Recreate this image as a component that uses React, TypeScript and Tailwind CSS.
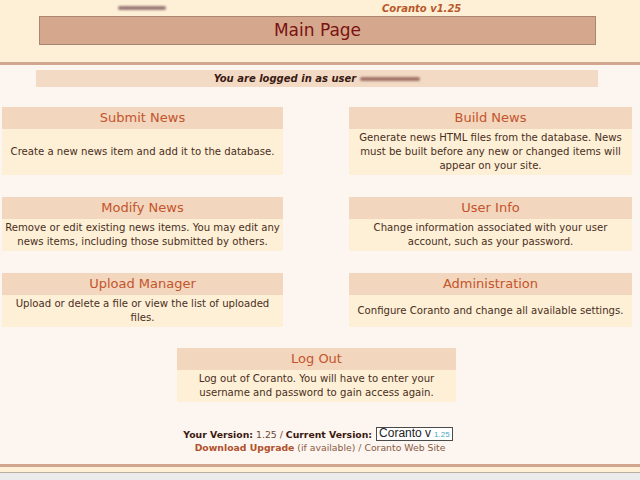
import React from "react";

const cards: [string, string][] = [
  ["Submit News", "Create a new news item and add it to the database."],
  ["Build News", "Generate news HTML files from the database. News must be built before any new or changed items will appear on your site."],
  ["Modify News", "Remove or edit existing news items. You may edit any news items, including those submitted by others."],
  ["User Info", "Change information associated with your user account, such as your password."],
  ["Upload Manager", "Upload or delete a file or view the list of uploaded files."],
  ["Administration", "Configure Coranto and change all available settings."],
];

function Card({ title, body }: { title: string; body: string }) {
  return (
    <div className="flex flex-col">
      <div className="h-[22px] bg-[#f2d6bd] flex items-center justify-center text-[13px] text-[#c4542c]">{title}</div>
      <div className="flex-1 bg-[#fdf0d6] flex items-center justify-center text-center text-[10.15px] leading-[14px] text-[#4a2e22] px-[2px] py-[2px]">
        {body}
      </div>
    </div>
  );
}

export default function App() {
  return (
    <div className="w-[640px] h-[480px] overflow-hidden bg-[#fdf5ef] flex flex-col font-['DejaVu_Sans',sans-serif]">
      <div className="h-[65px] bg-[#fdf0d6] border-b-[3px] border-[#d3a68f] shrink-0">
        <div className="h-[16px] flex items-center pl-[118px]">
          <div className="w-[48px] h-[4px] rounded-full bg-[#9a7a78] blur-[1px]" />
          <div className="ml-[216px] text-[10px] font-bold italic text-[#b8582a]">Coranto v1.25</div>
        </div>
        <div className="ml-[39px] w-[557px] h-[29px] bg-[#d5a78c] border border-[#a9866f] flex items-center justify-center text-[17px] text-[#7a1212]">
          Main Page
        </div>
      </div>
      <div className="shrink-0 mt-[5px] ml-[36px] w-[562px] h-[17px] bg-[#f3dac4] flex items-center justify-center text-[10px] font-bold italic text-[#3a1a14]">
        <span>You are logged in as user</span>
        <span className="ml-[4px] w-[60px] h-[4px] rounded-full bg-[#a07468] blur-[1px]" />
      </div>
      <div className="shrink-0 mt-[20px] ml-[2px] grid grid-cols-[281px_283px] gap-x-[66px] gap-y-[22px]">
        {cards.map(([t, b]) => (
          <Card key={t} title={t} body={b} />
        ))}
      </div>
      <div className="shrink-0 mt-[21px] ml-[177px] w-[279px]">
        <Card title="Log Out" body="Log out of Coranto. You will have to enter your username and password to gain access again." />
      </div>
      <div className="shrink-0 mt-[25px] flex flex-col items-center text-[9.3px] leading-[13px] text-[#4a2e22]">
        <div className="flex items-center ml-[-4px]">
          <span className="font-bold text-[#3a1810]">Your Version:</span>
          <span className="ml-[3px] text-[#6a4a3a]">1.25 /</span>
          <span className="ml-[3px] font-bold text-[#3a1810]">Current Version:</span>
          <span className="ml-[4px] h-[14px] px-[2px] border border-[#4a4a4a] bg-white flex items-end font-['Liberation_Sans',sans-serif] text-[12px] leading-[13px] text-[#222]">
            Coranto v<span className="ml-[3px] text-[8px] leading-[11px] text-[#4aa8c0]">1.25</span>
          </span>
        </div>
        <div>
          <span className="font-bold text-[#b0502c]">Download Upgrade</span>
          <span className="text-[#8a5a44]"> (if available) / Coranto Web Site</span>
        </div>
      </div>
      <div className="mt-auto shrink-0">
        <div className="h-[3px] bg-[#d3a68f]" />
        <div className="h-[6px] bg-[#fdf0d6] border-b border-[#b8aca0]" />
        <div className="h-[7px] bg-[#ebebeb]" />
      </div>
    </div>
  );
}
